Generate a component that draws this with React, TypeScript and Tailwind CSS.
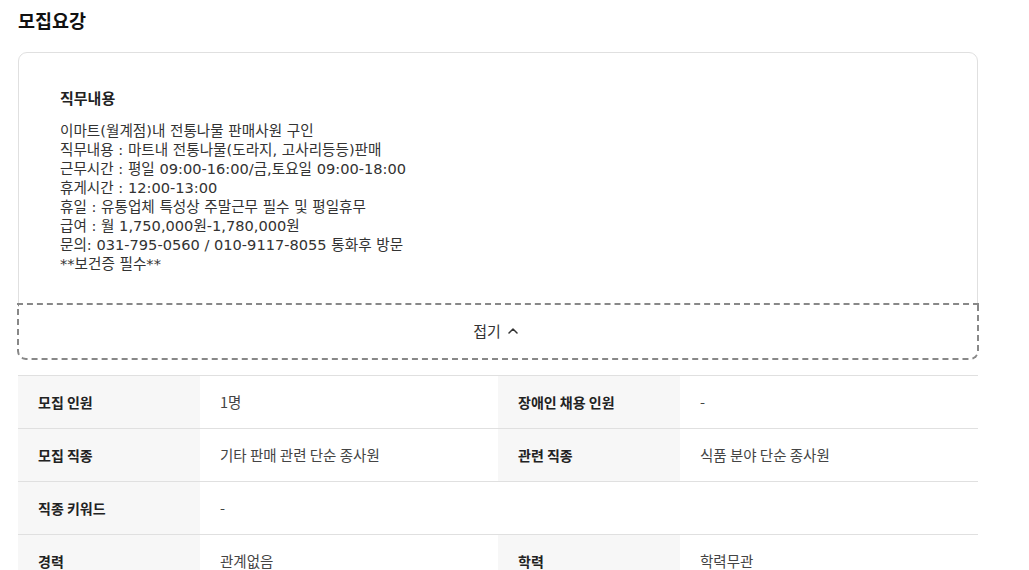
import React from "react";

const rows: { l1: string; v1: string; l2?: string; v2?: string }[] = [
  { l1: "모집 인원", v1: "1명", l2: "장애인 채용 인원", v2: "-" },
  { l1: "모집 직종", v1: "기타 판매 관련 단순 종사원", l2: "관련 직종", v2: "식품 분야 단순 종사원" },
  { l1: "직종 키워드", v1: "-" },
  { l1: "경력", v1: "관계없음", l2: "학력", v2: "학력무관" },
];

const lines = [
  "이마트(월계점)내 전통나물 판매사원 구인",
  "직무내용 : 마트내 전통나물(도라지, 고사리등등)판매",
  "근무시간 : 평일 09:00-16:00/금,토요일 09:00-18:00",
  "휴게시간 : 12:00-13:00",
  "휴일 : 유통업체 특성상 주말근무 필수 및 평일휴무",
  "급여 : 월 1,750,000원-1,780,000원",
  "문의: 031-795-0560 / 010-9117-8055 통화후 방문",
  "**보건증 필수**",
];

export default function App() {
  return (
    <div
      className="w-[1029px] h-[570px] overflow-hidden bg-white"
      style={{ fontFamily: '"Noto Sans CJK KR", "Noto Sans", sans-serif' }}
    >
      <div className="w-[960px] ml-[18px]">
        <h2 className="text-[18.5px] leading-[26px] font-bold text-[#111] pt-[7px]">모집요강</h2>
        <div className="mt-[19px] border border-[#e0e0e0] rounded-[9px] flex flex-col">
          <div className="pt-[35px] pl-[41px] pb-[30px]">
            <h3 className="text-[15px] leading-[20px] font-bold text-[#222]">직무내용</h3>
            <div className="mt-[13px] text-[14.6px] leading-[19px] text-[#333] font-['DejaVu_Sans','Noto_Sans_CJK_KR',sans-serif]">
              {lines.map((t, i) => (
                <div key={i}>{t}</div>
              ))}
            </div>
          </div>
          <button className="self-stretch -mx-[2px] -mb-[1px] h-[57px] border-2 border-dashed border-[#888] rounded-b-[9px] flex items-center justify-center gap-[6px] text-[15px] text-[#333] bg-white pr-[4px]">
            <span>접기</span>
            <svg width="12" height="12" viewBox="0 0 12 12" fill="none" className="mt-[-2px]">
              <path d="M2 8 L6 4 L10 8" stroke="#333" strokeWidth="1.5" strokeLinecap="round" strokeLinejoin="round" />
            </svg>
          </button>
        </div>
        <div className="mt-[15px] border-t border-[#e0e0e0]">
          {rows.map((r, i) => (
            <div key={i} className="grid grid-cols-[182px_298px_182px_298px] h-[53px] border-b border-[#e0e0e0] text-[14px]">
              <div className="bg-[#f7f7f7] flex items-center pl-[20px] font-bold text-[#222]">{r.l1}</div>
              <div className="flex items-center pl-[20px] text-[14.5px] text-[#444]">{r.v1}</div>
              {r.l2 ? (
                <>
                  <div className="bg-[#f7f7f7] flex items-center pl-[20px] font-bold text-[#222]">{r.l2}</div>
                  <div className="flex items-center pl-[20px] text-[14.5px] text-[#444]">{r.v2}</div>
                </>
              ) : (
                <>
                  <div />
                  <div />
                </>
              )}
            </div>
          ))}
        </div>
      </div>
    </div>
  );
}
